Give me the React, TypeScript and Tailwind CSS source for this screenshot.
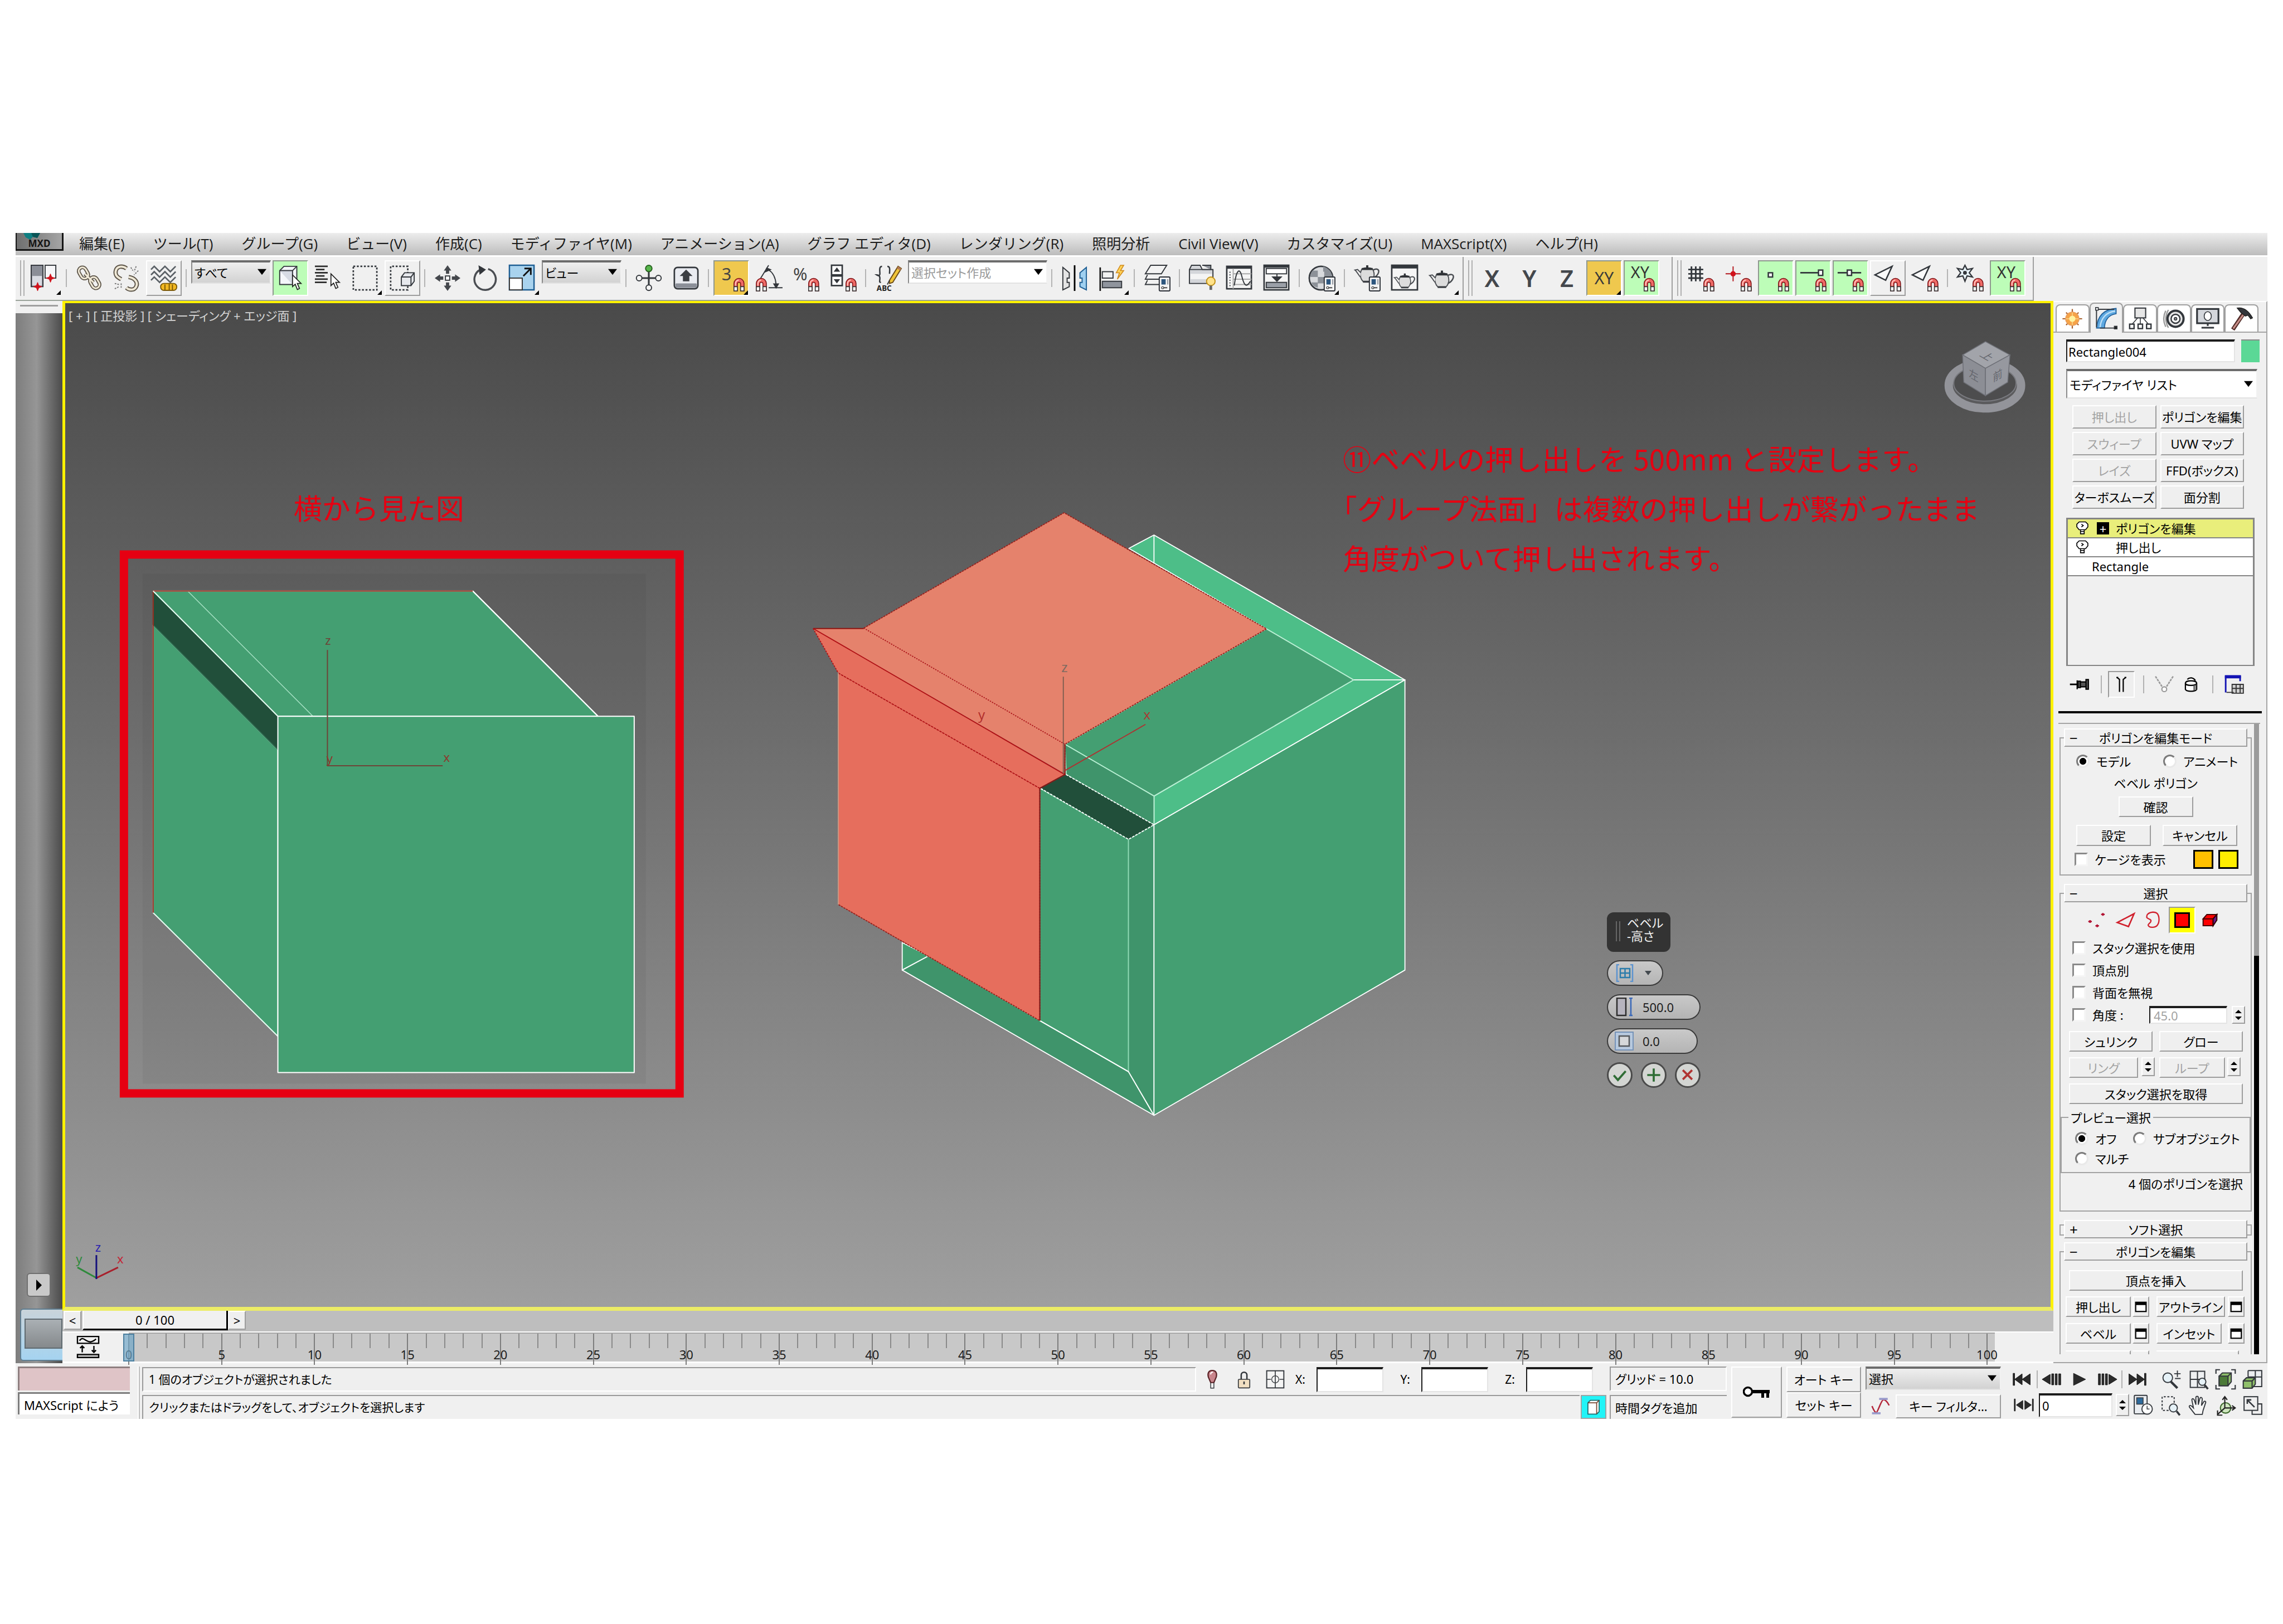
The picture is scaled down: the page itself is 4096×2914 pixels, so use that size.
import React from "react";

const UI = "font-['Noto_Sans','Noto_Sans_CJK_JP',sans-serif] [font-feature-settings:'palt']";
const RAISED = "border-2 border-t-white border-l-white border-r-[#9d9d9d] border-b-[#9d9d9d] bg-[#efefef]";
const SUNKEN = "border-2 border-t-[#9a9a9a] border-l-[#9a9a9a] border-r-white border-b-white bg-[#efefef]";
const FIELD = "border-t-4 border-l-2 border-t-[#1c1c1c] border-l-[#1c1c1c] border-r-2 border-b-2 border-r-[#e4e4e4] border-b-[#e4e4e4] bg-white";

/* ---------- icon helpers ---------- */

function Icon({ children, className = "size-12" }: { children: React.ReactNode; className?: string }) {
  return (
    <svg viewBox="-0.5 -0.5 25 25" className={`overflow-visible ${className}`} fill="none" stroke="#33373c" strokeWidth="1" aria-hidden="true">
      {children}
    </svg>
  );
}

function Magnet({ x = 14, y = 12 }: { x?: number; y?: number }) {
  return (
    <g transform={`translate(${x} ${y})`}>
      <path d="M.5 12V5a4.7 4.7 0 0 1 9.4 0v7H6.7V5.4a1.5 1.5 0 0 0-3 0V12z" fill="#ee6a66" stroke="#7d1216" strokeWidth=".8" />
      <path d="M2 7V5a3.2 3.2 0 0 1 3-3.2" stroke="#ffc9c4" strokeWidth="1" />
      <path d="M.5 8h3.2v4H.5zM6.7 8h3.2v4H6.7z" fill="#fff" stroke="#333" strokeWidth=".8" />
    </g>
  );
}

function Star({ x, y }: { x: number; y: number }) {
  return <path d={`M${x} ${y - 4}l1.1 2.9 2.9 1.1-2.9 1.1-1.1 2.9-1.1-2.9-2.9-1.1 2.9-1.1z`} fill="#d0121b" stroke="#d0121b" strokeWidth=".5" />;
}

function Dialog({ x = 14, y = 11 }: { x?: number; y?: number }) {
  return (
    <g transform={`translate(${x} ${y})`}>
      <rect x="0" y="0" width="10" height="13" rx="1" fill="#f4f4f4" stroke="#2b2f36" />
      <rect x="2" y="2" width="4" height="5" fill="#2d567e" stroke="none" />
      <path d="M8 2v5" stroke="#8a8f98" />
      <path d="M2.5 10h5" stroke="#444" />
      <circle cx="3.2" cy="10" r="1" fill="#fff" stroke="#444" strokeWidth=".7" />
    </g>
  );
}

function Teapot({ x = 0, y = 0, s = 1 }: { x?: number; y?: number; s?: number }) {
  return (
    <g transform={`translate(${x} ${y}) scale(${s})`}>
      <path d="M7 5.5c3-1.6 7-1.6 10 0 2.5 4.5 1.5 9-1 11.5H8C5.5 14.5 4.5 10 7 5.5z" fill="#dcdcdc" stroke="#4a4d52" />
      <path d="M5.6 13C3 10 2.5 8 .5 6.5L3 6l3 3" fill="#eee" stroke="#4a4d52" />
      <path d="M17.5 6.5c3.5-2 6-.5 5 2.5-.8 2.2-2.5 4-5 5" stroke="#4a4d52" strokeWidth="1.3" />
      <path d="M7 5.5h10M12 2v2.5" stroke="#2f3236" strokeWidth="2" />
      <path d="M8 17.5h8" stroke="#3a3d42" strokeWidth="1.5" />
    </g>
  );
}

function Cursor({ x, y }: { x: number; y: number }) {
  return <path d={`M${x} ${y}v11l2.5-2.3 2 5 2-1-2-4.7h3.5z`} fill="#fff" stroke="#222" strokeWidth=".9" />;
}

type ToolState = "flat" | "raised" | "green" | "orange";

const toolState: Record<ToolState, string> = {
  flat: "border-transparent",
  raised: "border-t-white border-l-white border-r-[#9d9d9d] border-b-[#9d9d9d]",
  green: "bg-[#bdfdb8] border-t-[#8f988f] border-l-[#8f988f] border-r-white border-b-white",
  orange: "bg-[#efc84e] border-t-[#8f988f] border-l-[#8f988f] border-r-white border-b-white",
};

function Tool({ label, state = "flat", flyout, children }: { label: string; state?: ToolState; flyout?: boolean; children: React.ReactNode }) {
  return (
    <button type="button" aria-label={label} className={`relative flex size-16 shrink-0 items-center justify-center border-2 ${toolState[state]}`}>
      {children}
      {flyout && (
        <svg viewBox="0 0 6 6" className="absolute right-0 bottom-0 size-2" aria-hidden="true">
          <path d="M6 0v6H0z" fill="#000" />
        </svg>
      )}
    </button>
  );
}

function Sep() {
  return <span className="mx-1 h-8 w-[3px] shrink-0 self-center border-l-2 border-[#b4b4b4]" />;
}

function Handle() {
  return <span className="h-16 w-2 shrink-0 border-x-2 border-[#b0b0b0]" />;
}

function Dropdown({ label, options, className, tone = "grey" }: { label: string; options: string[]; className: string; tone?: "grey" | "white" | "muted" }) {
  const tones = {
    grey: "bg-linear-to-b from-[#efefef] to-[#d2d2d2] text-black",
    white: "bg-white text-black",
    muted: "bg-white text-[#9a9a9a]",
  };
  return (
    <div className={`relative shrink-0 ${className}`}>
      <select
        aria-label={label}
        className={`h-full w-full appearance-none rounded-none border-t-4 border-r-2 border-b-2 border-l-2 border-t-[#6c6c6c] border-r-[#f2f2f2] border-b-[#e2e2e2] border-l-[#8a8a8a] pl-1 leading-none outline-none ${tones[tone]}`}
      >
        {options.map((o) => (
          <option key={o}>{o}</option>
        ))}
      </select>
      <svg viewBox="0 0 12 8" className="pointer-events-none absolute top-1/2 right-2 h-3 w-4 -translate-y-1/2" aria-hidden="true">
        <path d="M0 0h12L6 8z" fill="#000" />
      </svg>
    </div>
  );
}

/* ---------- menu ---------- */

const menus = [
  "編集(E)", "ツール(T)", "グループ(G)", "ビュー(V)", "作成(C)", "モディファイヤ(M)", "アニメーション(A)",
  "グラフ エディタ(D)", "レンダリング(R)", "照明分析", "Civil View(V)", "カスタマイズ(U)", "MAXScript(X)", "ヘルプ(H)",
];

function MenuBar() {
  return (
    <header className="flex h-[43px] items-start border-b-3 border-white bg-linear-to-b from-[#ededed] to-[#bcbcbc]">
      <button
        type="button"
        aria-label="アプリケーション メニュー"
        className="relative flex h-8 w-[86px] items-end justify-center overflow-hidden border-r-3 border-b-3 border-l-2 border-[#151515] bg-linear-to-r from-[#6f6f6f] to-[#a5a5a5] text-[17px] leading-5 font-bold text-[#141414]"
      >
        <svg viewBox="0 0 40 12" className="absolute top-0 left-2 h-3 w-10" aria-hidden="true">
          <path d="M4 0h30l-5 9-8-2-5 5-8-4z" fill="#0f7f82" />
          <path d="M18 0h16l-5 9-8-2z" fill="#0a5557" />
        </svg>
        <span>MXD</span>
      </button>
      <nav className="ml-7 flex h-[38px] items-center gap-[51px] text-[26px] leading-none whitespace-nowrap text-[#1c1c1c] font-['Open_Sans','Noto_Sans_CJK_JP',sans-serif] [font-feature-settings:normal]">
        {menus.map((m) => (
          <button type="button" key={m}>{m}</button>
        ))}
      </nav>
    </header>
  );
}

/* ---------- toolbar ---------- */

function ToolGroup({ children, className }: { children: React.ReactNode; className: string }) {
  return (
    <div className={`flex items-start gap-[3px] border-r-2 border-b-2 border-r-[#a0a0a0] border-b-[#9aa39a] pt-1.5 pb-[7px] pl-2 ${className}`}>{children}</div>
  );
}

function Toolbar() {
  return (
    <div className={`flex bg-[#f0f0f0] text-[24px] ${UI}`} role="toolbar" aria-label="メイン ツールバー">
      <ToolGroup className="pr-[5px]">
        <Handle />
        <Tool label="レイアウト" flyout>
          <Icon>
            <rect x="0" y="0" width="11" height="20" fill="#8b8e97" />
            <rect x="1" y="10" width="9" height="9" fill="#d9dbe2" stroke="none" />
            <rect x="13" y="0" width="10" height="12" fill="#f6f6f8" />
            <Star x={6} y={20} />
            <Star x={18} y={12} />
          </Icon>
        </Tool>
        <Sep />
        <Tool label="リンク">
          <Icon>
            <g stroke="#5b5347" strokeWidth="3.4"><rect x="3" y="2" width="7" height="11" rx="3.5" transform="rotate(-30 6 7)" /><rect x="14" y="11" width="7" height="11" rx="3.5" transform="rotate(-30 17 17)" /><path d="M8 8l8 8" /></g>
            <g stroke="#efe8d6" strokeWidth="1.6"><rect x="3" y="2" width="7" height="11" rx="3.5" transform="rotate(-30 6 7)" /><rect x="14" y="11" width="7" height="11" rx="3.5" transform="rotate(-30 17 17)" /><path d="M8 8l8 8" /></g>
          </Icon>
        </Tool>
        <Tool label="リンク解除">
          <Icon>
            <g stroke="#5b5347" strokeWidth="4"><path d="M12 3C8 0 3 1 2 5s1 6 5 8M14 11c6 1 9 5 7 9s-7 3-9 1" /></g>
            <g stroke="#efe8d6" strokeWidth="2"><path d="M12 3C8 0 3 1 2 5s1 6 5 8M14 11c6 1 9 5 7 9s-7 3-9 1" /></g>
            <path d="M16 2l2 3M21 1l-2 5M23 5l-4 4M1 17l4 1M1 22l4-2M7 17v5" stroke="#777" strokeDasharray="1.5 1" />
          </Icon>
        </Tool>
        <Tool label="スペース ワープにバインド" state="raised">
          <Icon>
            <g stroke="#5a6066" strokeWidth="1.4"><path d="M0 4l3-3 5 5 5-5 5 5 5-5M0 9l3-3 5 5 5-5 5 5 5-5M0 14l3-3 5 5 5-5 5 5 5-5" /></g>
            <rect x="9" y="17" width="15" height="6.5" rx="3" fill="#f2b822" stroke="#7d5a06" />
            <path d="M13 18v5M17 17v6M20 18v5" stroke="#7d5a06" />
          </Icon>
        </Tool>
        <Sep />
        <Dropdown label="選択フィルタ" options={["すべて"]} className="h-[42px] w-[143px] text-[22px]" />
        <Tool label="オブジェクトを選択" state="green">
          <Icon>
            <path d="M2 5l4-4h12v13l-3 4H2z" fill="#f4f6fa" />
            <path d="M2 5h12v13M14 5l4-4" fill="#d7dbe4" />
            <Cursor x={14} y={9} />
          </Icon>
        </Tool>
        <Tool label="名前から選択">
          <Icon>
            <path d="M0 1h12M1 4h8M0 7h12M1 10h8M0 13h12M0 16h11" stroke="#2c2c2c" strokeWidth="1.4" />
            <Cursor x={15} y={8} />
          </Icon>
        </Tool>
        <Tool label="矩形選択領域" flyout>
          <Icon><rect x="1" y="1" width="22" height="22" strokeWidth="1.4" strokeDasharray="1.8 1.5" /></Icon>
        </Tool>
        <Tool label="ウィンドウ/交差" state="raised">
          <Icon>
            <path d="M17 8V1H1v22h16v-4" strokeWidth="1.4" strokeDasharray="1.8 1.5" />
            <path d="M11 11l3-4h9v8l-3 4h-9z" fill="#e6e8ec" />
            <path d="M11 11h9v8M20 11l3-4" />
          </Icon>
        </Tool>
        <Sep />
        <Tool label="移動">
          <Icon>
            <g fill="#44474c" stroke="none"><path d="M12 0l3.5 5h-2v3h-3V5h-2zM12 24l-3.5-5h2v-3h3v3h2zM0 12l5-3.5v2h3v3H5v2zM24 12l-5 3.5v-2h-3v-3h3v-2z" /></g>
            <rect x="10" y="10" width="4" height="4" fill="#fff" />
          </Icon>
        </Tool>
        <Tool label="回転">
          <Icon>
            <path d="M15 3.5A10 10 0 1 1 8 4" stroke="#4a4d52" strokeWidth="1.8" />
            <path d="M6 0l7 4-6 5z" fill="#33363b" stroke="none" />
          </Icon>
        </Tool>
        <Tool label="スケール" flyout>
          <Icon>
            <rect x="0" y="0" width="23" height="23" fill="#a9d3ee" stroke="#1f5f94" strokeWidth="1.3" />
            <rect x="0" y="12" width="12" height="11" fill="#fff" stroke="#333" />
            <path d="M13 10l7-7M14 3h6v6" stroke="#111" strokeWidth="1.5" />
          </Icon>
        </Tool>
        <Dropdown label="参照座標系" options={["ビュー"]} className="h-[42px] w-[143px] text-[22px]" />
        <Sep />
        <Tool label="基点中心を使用">
          <Icon>
            <path d="M12 6v13M4 12h16" strokeWidth="1.6" />
            <circle cx="12" cy="3" r="3" fill="#57b64c" stroke="#27611f" />
            <g fill="#f4f4f4"><circle cx="3" cy="12" r="2.6" /><circle cx="21" cy="12" r="2.6" /><circle cx="12" cy="21" r="2.6" /></g>
          </Icon>
        </Tool>
        <Tool label="選択して操作">
          <Icon>
            <rect x="1" y="2" width="22" height="20" rx="3" fill="#e9ebf0" strokeWidth="1.4" />
            <rect x="2" y="17" width="20" height="4" rx="1" fill="#8b8f98" stroke="none" />
            <path d="M12 4l6 6h-3v5H9v-5H6z" fill="#3a3d42" stroke="none" />
          </Icon>
        </Tool>
        <Sep />
        <Tool label="スナップ切り替え" state="orange" flyout>
          <Icon>
            <text x="3" y="14" fontSize="16" fill="#444" stroke="none">3</text>
            <Magnet />
          </Icon>
        </Tool>
        <Tool label="角度スナップ">
          <Icon>
            <path d="M12 0L4 13M11 4c5 2 8 8 8 16M12 21h13" />
            <path d="M8 7l2-5 5 2zM16 17h6l-3 5z" fill="#33363b" stroke="none" />
            <Magnet x={0} />
          </Icon>
        </Tool>
        <Tool label="パーセント スナップ">
          <Icon>
            <text x="0" y="14" fontSize="16" fill="#444" stroke="none">%</text>
            <Magnet />
          </Icon>
        </Tool>
        <Tool label="スピナー スナップ">
          <Icon>
            <rect x="1" y="0" width="10" height="9" fill="#fff" strokeWidth="1.4" /><rect x="1" y="10" width="10" height="9" fill="#fff" strokeWidth="1.4" />
            <path d="M3 6l3-4 3 4zM3 13l3 4 3-4z" fill="#33363b" stroke="none" />
            <Magnet />
          </Icon>
        </Tool>
        <Sep />
        <Tool label="名前付き選択セットを編集">
          <Icon>
            <path d="M6 1C3 1 4 5 4 8S1 9 1 9s3 0 3 3-1 4 1 4M11 1c3 0 2 4 2 7" strokeWidth="1.3" />
            <path d="M13 14l8-13 3 2-8 13-3 1z" fill="#f0c53a" stroke="#6d4c17" />
            <path d="M20 3l3 2 1-2-3-2z" fill="#b37a55" stroke="none" />
            <path d="M13 14l-2 4" />
            <text x="1" y="24" fontSize="7" fontWeight="700" fill="#222" stroke="none">ABC</text>
          </Icon>
        </Tool>
        <Dropdown label="名前付き選択セット" options={["選択セット作成"]} tone="muted" className="h-[42px] w-[250px] text-[22px]" />
        <Sep />
        <Tool label="ミラー">
          <Icon>
            <path d="M1 2l6 5v5H5v4h2v4l-6 3z" fill="#e4e4e4" />
            <path d="M12 0v24" stroke="#000" strokeWidth="1.5" />
            <path d="M23 2l-6 5v5h2v4h-2v4l6 3z" fill="#9fd0f0" stroke="#1f5f94" />
          </Icon>
        </Tool>
        <Tool label="位置合わせ" flyout>
          <Icon>
            <path d="M1 2v22" stroke="#111" strokeWidth="1.4" />
            <rect x="3" y="6" width="10" height="6" fill="#f2f2f2" /><rect x="3" y="15" width="18" height="6" fill="#8f949d" />
            <path d="M20 0l-4 7h3l-2 6 6-8h-3l3-5z" fill="#ffd45a" stroke="#d08a1c" strokeWidth=".8" />
          </Icon>
        </Tool>
        <Sep />
        <Tool label="レイヤ管理">
          <Icon>
            <g fill="#f3f3f3"><path d="M6 0h15l-5 8H1zM3 9l-2 4h14M3 14l-2 4h14" /></g>
            <Dialog />
          </Icon>
        </Tool>
        <Sep />
        <Tool label="リボン">
          <Icon>
            <path d="M0 4l2-4h8l2 4h10v13H0z" fill="#d4d6da" /><path d="M0 4h22M12 0h8v4" fill="#8c9098" />
            <rect x="1" y="8" width="20" height="5" fill="#f4f4f4" stroke="none" />
            <circle cx="20" cy="15" r="4" fill="#ffe28a" stroke="#c39218" /><path d="M20 19v4" stroke="#666" strokeWidth="2.5" />
          </Icon>
        </Tool>
        <Tool label="カーブ エディタ">
          <Icon>
            <rect x="0" y="1" width="23" height="21" fill="#f5f5f5" strokeWidth="1.4" /><path d="M0 2h23" strokeWidth="2.5" />
            <path d="M6 3v19M6 8h17M6 13h17M6 18h17" stroke="#aaa" /><path d="M3 6v14" strokeDasharray="1 1.5" />
            <path d="M7 19C9 4 12 2 14 10s4 12 8 5" />
          </Icon>
        </Tool>
        <Tool label="スケマティック ビュー">
          <Icon>
            <rect x="0" y="0" width="23" height="23" fill="#f5f5f5" strokeWidth="1.4" /><path d="M0 1h23" strokeWidth="2.5" />
            <rect x="2" y="3" width="19" height="5" fill="#fff" /><rect x="2" y="16" width="19" height="5" fill="#9ba0a8" />
            <path d="M12 8v5" /><path d="M8 11h8l-4 4z" fill="#33363b" />
          </Icon>
        </Tool>
        <Sep />
        <Tool label="マテリアル エディタ" flyout>
          <Icon>
            <circle cx="11" cy="12" r="11" fill="#d8dadd" strokeWidth="1.4" />
            <path d="M3 5h5v6H1c0-3 1-4 2-6zM13 1c3 1 6 3 7 5h-7zM8 11h6v6H8zM2 16h6v5c-3-1-5-2-6-5zM14 6h6l2 5h-8z" fill="#8c9198" stroke="none" />
            <Dialog />
          </Icon>
        </Tool>
        <Sep />
        <Tool label="レンダリング設定">
          <Icon><Teapot y={-2} /><Dialog /></Icon>
        </Tool>
        <Tool label="レンダリング フレーム ウィンドウ">
          <Icon>
            <rect x="0" y="0" width="24" height="23" fill="#f5f5f5" strokeWidth="1.4" /><path d="M0 1.5h24" strokeWidth="3" />
            <Teapot x={2} y={6} s={0.85} />
          </Icon>
        </Tool>
        <Tool label="プロダクション レンダリング" flyout>
          <Icon><Teapot y={3} /></Icon>
        </Tool>
      </ToolGroup>
      <ToolGroup className="pr-[22px]">
        <Handle />
        <Tool label="X に拘束"><span className="text-[42px] leading-none font-semibold text-[#44474c]">X</span></Tool>
        <Tool label="Y に拘束"><span className="text-[42px] leading-none font-semibold text-[#44474c]">Y</span></Tool>
        <Tool label="Z に拘束"><span className="text-[42px] leading-none font-semibold text-[#44474c]">Z</span></Tool>
        <Tool label="XY 平面に拘束" state="orange" flyout><span className="text-[30px] leading-none text-[#3a3a3a]">XY</span></Tool>
        <Tool label="XY 軸拘束スナップ" state="green">
          <Icon><text x="2" y="12" fontSize="15" fill="#333" stroke="none">XY</text><Magnet /></Icon>
        </Tool>
      </ToolGroup>
      <ToolGroup className="pr-[13px]">
        <Handle />
        <Tool label="グリッド スナップ"><Icon><path d="M3 1v14M7 1v14M11 1v14M0 4h14M0 8h14M0 12h14" strokeWidth="1.5" /><Magnet /></Icon></Tool>
        <Tool label="基点スナップ"><Icon><path d="M7 1v14M0 8h14" stroke="#b3161c" /><circle cx="7" cy="8" r="2.5" fill="#d0121b" stroke="none" /><Magnet /></Icon></Tool>
        <Tool label="頂点スナップ" state="green"><Icon><rect x="5" y="7" width="4" height="4" fill="#fff" strokeWidth="1.3" /><Magnet /></Icon></Tool>
        <Tool label="端点スナップ" state="green"><Icon><path d="M0 7h17" strokeWidth="1.5" /><rect x="17" y="4.5" width="4" height="5" fill="#fff" strokeWidth="1.3" /><Magnet /></Icon></Tool>
        <Tool label="中点スナップ" state="green"><Icon><path d="M0 7h22" strokeWidth="1.5" /><rect x="9" y="4.5" width="4" height="5" fill="#fff" strokeWidth="1.3" /><Magnet /></Icon></Tool>
        <Tool label="面スナップ" state="raised"><Icon><path d="M16 1L0 9l10 5z" fill="#fafafa" strokeWidth="1.3" /><Magnet /></Icon></Tool>
        <Tool label="面中心スナップ"><Icon><path d="M16 1L0 9l10 5z" fill="#fafafa" strokeWidth="1.3" /><Magnet /></Icon></Tool>
        <Sep />
        <Tool label="フリーズ オブジェクト スナップ"><Icon><path d="M7 0l2 4 5-1-3 4 3 4-5-1-2 5-2-5-5 1 3-4-3-4 5 1z" fill="#e8f4fb" strokeWidth="1.2" /><circle cx="7" cy="7" r="1.3" fill="#33363b" /><Magnet /></Icon></Tool>
        <Tool label="軸拘束スナップ" state="green"><Icon><text x="2" y="12" fontSize="15" fill="#333" stroke="none">XY</text><Magnet /></Icon></Tool>
      </ToolGroup>
    </div>
  );
}

/* ---------- viewport ---------- */

function Scene() {
  return (
    <svg viewBox="117 544 3560 1803" className="absolute inset-0 h-full w-full" aria-hidden="true">
      {/* side view inset */}
      <rect x="253" y="1030" width="904" height="916" fill="#000" opacity=".04" />
      <g strokeWidth="2" strokeLinejoin="round">
        <path d="M272 1061H846L1071 1286H496z" fill="#449f72" stroke="#e8fff4" />
        <path d="M272 1122L496 1346V1861L272 1639z" fill="#449f72" stroke="#e8fff4" />
        <path d="M272 1061L496 1286V1346L272 1122z" fill="#214f3a" stroke="#2c6b4e" />
        <path d="M334 1061L559 1286" stroke="#a9e3c6" strokeWidth="1.5" />
        <path d="M846 1061L1071 1286" stroke="#fff" />
        <path d="M496 1286H1136V1926H496z" fill="#449f72" stroke="#fff" />
        <path d="M272 1639V1061H846" fill="none" stroke="#9c2a1e" />
        <path d="M272 1061L496 1286" stroke="#e8fff4" />
        <path d="M585 1167V1375H792" fill="none" stroke="#6d4437" />
      </g>
      <g fontSize="22" fill="#6d4437" textAnchor="middle">
        <text x="586" y="1158">z</text>
        <text x="799" y="1368" fill="#8c3a2e">x</text>
        <text x="589" y="1370" fill="#8c3a2e">y</text>
      </g>
      <rect x="219.5" y="995.5" width="998" height="968" fill="none" stroke="#e60012" strokeWidth="15" />

      {/* isometric view */}
      <g transform="translate(1432 895) scale(.727)" strokeWidth="2.5" strokeLinejoin="round">
        <path d="M815 123L877 90L1497 448H1370z" fill="#4dbe88" stroke="#fff" />
        <path d="M877 90V160" stroke="#fff" />
        <path d="M1497 448L877 806V735L1370 448z" fill="#4dbe88" stroke="#fff" />
        <path d="M1155 322L1370 448L877 735L657 607z" fill="#449f72" stroke="#b8efd3" />
        <path d="M657 607L877 735V806L660 682z" fill="#3f946b" stroke="#b8efd3" />
        <path d="M255 1097V1165L320 1130z" fill="#449f72" stroke="#fff" />
        <path d="M255 1165L877 1524L814 1416L320 1130z" fill="#3f946b" stroke="#fff" />
        <path d="M595 716L814 842V1416L595 1290z" fill="#449f72" stroke="#8fd9b4" />
        <path d="M814 842L877 806V1524L814 1416z" fill="#3f946b" stroke="#8fd9b4" />
        <path d="M597 716L660 682L877 806L814 842z" fill="#214f3a" stroke="none" />
        <path d="M660 682L877 806L814 842L597 716" fill="none" stroke="#fff" strokeDasharray="6 3" />
        <path d="M877 806L1497 448V1165L877 1524z" fill="#449f72" stroke="#fff" />
        <path d="M595 1290L814 1416L877 1524" fill="none" stroke="#fff" />
        <path d="M655 35L1155 322L657 607L160 320z" fill="#e5826c" stroke="none" />
        <path d="M35 321L160 320L657 607V680z" fill="#e5826c" stroke="none" />
        <path d="M35 321L97 431L595 716L657 682z" fill="#e66e5d" stroke="none" />
        <path d="M97 431V1003L595 1290V716z" fill="#e66e5d" stroke="none" />
        <g fill="none" stroke="#b01015">
          <path d="M160 320L655 35L1155 322L657 607V682L595 716V1290L97 1003" stroke="#98201c" strokeDasharray="5 2" />
          <path d="M657 607V682L595 716V1290" stroke="#7a1c1a" strokeWidth="3" />
          <path d="M35 321H160" stroke="#8c1512" strokeWidth="3" />
          <path d="M35 321L97 431" strokeDasharray="4 3" />
          <path d="M160 320L657 607" strokeDasharray="3 3" />
          <path d="M35 321L657 682" />
          <path d="M97 431L595 716" strokeDasharray="6 2" />
          <path d="M97 431V1003" stroke="#c99a86" />
        </g>
        <path d="M653 440V680" stroke="#7a5d4f" />
        <path d="M657 672L856 558" stroke="#b03030" />
      </g>
      <g fontSize="24" textAnchor="middle">
        <text x="1909" y="1207" fill="#7d6a60">z</text>
        <text x="2057" y="1292" fill="#a83a34">x</text>
        <text x="1760" y="1292" fill="#b3302c">y</text>
      </g>

      {/* view cube */}
      <ellipse cx="3562" cy="692" rx="65" ry="41" fill="#5a5a5c" stroke="#93949a" strokeWidth="15" />
      <ellipse cx="3562" cy="688" rx="56" ry="32" fill="#4d4d4e" stroke="#7a7b80" strokeWidth="2" />
      <g stroke="#6e7077" strokeWidth="1.5">
        <path d="M3563 613L3607 637L3563 661L3522 637z" fill="#a2a4aa" />
        <path d="M3522 637L3563 661V710L3524 686z" fill="#8c8e95" />
        <path d="M3607 637L3563 661V710L3603 686z" fill="#96989f" />
      </g>
      <g fontSize="20" fill="#65676e" textAnchor="middle">
        <text transform="matrix(.86 .5 -.86 .5 3560 643)">上</text>
        <text transform="matrix(.86 .5 0 1 3542 681)">左</text>
        <text transform="matrix(.86 -.5 0 1 3585 681)">前</text>
      </g>

      {/* world axis tripod */}
      <g fill="none" strokeWidth="3">
        <path d="M170 2295L136 2276" stroke="#2f8a3c" />
        <path d="M170 2295L209 2276" stroke="#a8202c" />
        <path d="M170 2297V2254" stroke="#14107c" />
      </g>
      <g fontSize="22" textAnchor="middle">
        <text x="139" y="2269" fill="#2f8a3c">y</text>
        <text x="213" y="2269" fill="#c32636">x</text>
        <text x="173" y="2248" fill="#2a1fb0">z</text>
      </g>
    </svg>
  );
}

const PILL = "flex h-[46px] items-center rounded-full border-2 border-[#3a3a3a] bg-linear-to-b from-[#c9c9c9] to-[#b4b4b4]";

function Caddy() {
  return (
    <div className="absolute top-[60.7%] left-[77.65%] flex flex-col items-start gap-[15px] text-[22px] leading-none text-[#1d1d1d]">
      <div className="flex h-[71px] w-[114px] items-start rounded-xl bg-[#333] pt-1.5 pl-4 text-[#f2f2f2]">
        <span className="mt-2.5 mr-3 h-9 w-2 border-x-2 border-[#666]" />
        <span className="text-[22px] leading-6">ベベル<br />-高さ</span>
      </div>
      <button type="button" aria-label="ベベル タイプ" className={`${PILL} w-[101px] gap-5 pl-3.5`}>
        <svg viewBox="0 0 32 32" className="size-8" fill="none" stroke="#2b7cab" strokeWidth="2.5" aria-hidden="true">
          <path d="M6 1H2v30h4M26 1h4v30h-4" stroke="#5c93cf" />
          <path d="M8 8h17v16H8zM16.5 8v16M8 16h17" />
        </svg>
        <svg viewBox="0 0 12 8" className="h-2 w-3" aria-hidden="true"><path d="M0 0h12L6 8z" fill="#444a50" /></svg>
      </button>
      <label className={`${PILL} w-[168px] pl-3.5`}>
        <svg viewBox="0 0 32 34" className="h-[34px] w-8" fill="none" aria-hidden="true">
          <rect x="2" y="1" width="16" height="31" fill="#b6b4be" stroke="#2c2c2c" strokeWidth="2.5" />
          <path d="M24 1h6M27 1v31M24 32h6" stroke="#3a68b8" strokeWidth="2.5" />
        </svg>
        <input aria-label="高さ" defaultValue="500.0" className="ml-4 w-20 bg-transparent outline-none" />
      </label>
      <label className={`${PILL} w-[163px] pl-3`}>
        <svg viewBox="0 0 34 34" className="size-[34px]" fill="none" aria-hidden="true">
          <rect x="1" y="1" width="32" height="32" fill="#b7c9de" stroke="#7693b8" strokeWidth="2" />
          <rect x="8" y="8" width="18" height="18" fill="#d6d8da" stroke="#55585c" strokeWidth="2.5" />
        </svg>
        <input aria-label="アウトライン" defaultValue="0.0" className="ml-4 w-20 bg-transparent outline-none" />
      </label>
      <div className="flex gap-[15px]">
        {[
          { n: "OK", d: "M10 22l8 9 15-17", c: "#2f6d35" },
          { n: "適用して続行", d: "M21.5 9v25M9 21.5h25", c: "#2f6d35" },
          { n: "キャンセル", d: "M12 12l18 18M30 12L12 30", c: "#b03432" },
        ].map((b) => (
          <button type="button" key={b.n} aria-label={b.n} className="size-[46px] rounded-full border-3 border-[#4a4a4a] bg-[#d3d5d2]">
            <svg viewBox="0 0 43 43" fill="none" stroke={b.c} strokeWidth="4" aria-hidden="true"><path d={b.d} /></svg>
          </button>
        ))}
      </div>
    </div>
  );
}

const NOTE = "absolute text-[51px] leading-[89px] font-normal whitespace-nowrap text-[#e60012] font-['Noto_Sans_CJK_JP',sans-serif] [font-feature-settings:normal]";

function Viewport() {
  return (
    <main className="relative flex-1 border-x-5 border-t-4 border-b-7 border-[#fff200] border-b-[#ecec66] bg-linear-to-b from-[#4a4a4a] to-[#9f9f9f]">
      <Scene />
      <p className="absolute top-2 left-1.5 text-[22px] leading-7 whitespace-nowrap text-[#d4d4d4]">[ + ] [ 正投影 ] [ シェーディング + エッジ面 ]</p>
      <p className={`${NOTE} top-[17.9%] left-[11.5%]`}>横から見た図</p>
      <p className={`${NOTE} top-[13%] left-[64.35%]`}>
        ⑪ベベルの押し出しを 500mm と設定します。
        <br />
        <span className="[font-feature-settings:'halt']">「</span>グループ法面」は複数の押し出しが繋がったまま
        <br />
        角度がついて押し出されます。
      </p>
      <Caddy />
    </main>
  );
}

/* ---------- timeline ---------- */

const frames = Array.from({ length: 100 }, (_, i) => i);

function TrackLabel({ n }: { n: number }) {
  return (
    <>
      <span className="absolute top-0 -left-px h-14 w-0.5 bg-[#7d7d7d]" />
      <span className="absolute top-[25px] left-0 -translate-x-1/2 text-[22px] leading-6 text-[#1c1c1c]">{n}</span>
    </>
  );
}

function Timeline() {
  return (
    <div className="text-[22px] leading-none">
      <div className="flex h-[39px] items-start border-b-2 border-white bg-[#bebebe] pl-0.5">
        <button type="button" aria-label="前のフレーム" className={`h-[34px] w-8 ${RAISED}`}>&lt;</button>
        <button type="button" className="ml-0.5 h-[35px] w-[261px] border-r-3 border-b-3 border-l-2 border-black border-l-white bg-[#f0f0f0]">0 / 100</button>
        <button type="button" aria-label="次のフレーム" className={`h-[34px] w-8 ${RAISED}`}>&gt;</button>
      </div>
      <div className="flex h-[55px] border-b-3 border-white bg-[#f0f0f0]">
        <button type="button" aria-label="ミニ カーブ エディタ" className="flex w-[119px] items-center justify-start pl-[25px]">
          <svg viewBox="0 0 42 42" className="h-10 w-[42px]" fill="none" stroke="#000" strokeWidth="2.5" aria-hidden="true">
            <path d="M1 1h40v13H1zM5 9c5-7 8-3 13 0s10 4 18-3M10 31V19M6 23l4-4 4 4M32 19v12M28 27l4 4 4-4" />
            <path d="M1 35h40v6H1z" fill="#bbb" />
          </svg>
        </button>
        <div className="relative flex flex-1 border-t-2 border-[#a5a5a5] bg-[#c8c8c8]">
          {frames.map((f) => (
            <div key={f} className="relative flex-1">
              {f % 5 === 0 ? <TrackLabel n={f} /> : <span className="absolute top-0 -left-px h-[26px] w-0.5 bg-[#8a8a8a]" />}
            </div>
          ))}
          <span className="absolute top-0 -left-2.5 h-full w-5 border-2 border-[#4c7f9f] bg-[#6fa5c6]/70" />
        </div>
        <div className="relative w-3.5 border-t-2 border-[#a5a5a5] bg-[#c8c8c8]"><TrackLabel n={100} /></div>
        <div className="w-[105px]" />
      </div>
    </div>
  );
}

/* ---------- command panel ---------- */

function PBtn({ children, className = "", disabled }: { children: React.ReactNode; className?: string; disabled?: boolean }) {
  return (
    <button type="button" disabled={disabled} className={`flex items-center justify-center leading-none whitespace-nowrap ${RAISED} ${disabled ? "text-[#a3a3a3]" : "text-black"} ${className}`}>
      {children}
    </button>
  );
}

function Spinner({ className = "h-9 w-6" }: { className?: string }) {
  return (
    <button type="button" aria-label="値を増減" className={`flex shrink-0 items-center justify-center ${RAISED} ${className}`}>
      <svg viewBox="0 0 12 20" className="h-6 w-3" aria-hidden="true"><path d="M0 7l6-6 6 6zM0 13l6 6 6-6z" fill="#000" /></svg>
    </button>
  );
}

function Radio({ name, label, checked, className = "" }: { name: string; label: string; checked?: boolean; className?: string }) {
  return (
    <label className={`flex h-7 items-center whitespace-nowrap ${className}`}>
      <input
        type="radio"
        name={name}
        defaultChecked={checked}
        className="mr-3 size-6 shrink-0 appearance-none rounded-full border-3 border-t-[#7b7b7b] border-r-[#e9e9e9] border-b-[#e9e9e9] border-l-[#7b7b7b] bg-white checked:bg-[radial-gradient(circle,#000_45%,#fff_50%)]"
      />
      {label}
    </label>
  );
}

function Check({ label, className = "" }: { label: string; className?: string }) {
  return (
    <label className={`flex h-7 items-center whitespace-nowrap ${className}`}>
      <input type="checkbox" className="mr-3 size-6 shrink-0 appearance-none border-3 border-t-[#8a8a8a] border-r-[#f5f5f5] border-b-[#f5f5f5] border-l-[#8a8a8a] bg-white" />
      {label}
    </label>
  );
}

function Title({ sign, children }: { sign: string; children: string }) {
  return (
    <button type="button" className={`relative mx-1.5 flex h-[33px] items-center justify-center leading-none ${RAISED}`}>
      <span className="absolute left-2 text-[26px]">{sign}</span>
      {children}
    </button>
  );
}

const FRAME = "flex flex-col border-2 border-[#a3a3a3]";

const tabs = [
  { n: "作成", icon: <><path d="M12 1v22M1 12h22M5 5l14 14M19 5L5 19" stroke="#a8602c" strokeWidth="1.4" /><circle cx="12" cy="12" r="7.5" fill="#f6a347" stroke="#e9a060" /><path d="M12 5v14M5 12h14" stroke="#fbd58a" /><circle cx="12" cy="12" r="3.5" fill="#fff3a0" stroke="none" /></> },
  { n: "修正", icon: <><path d="M1 23C2 10 9 2 23 1v6c-8 1-13 7-13 16z" fill="#5ea8e0" stroke="#1d5c97" /><path d="M5 22C6 12 12 5 22 4" stroke="#bfe0f7" strokeWidth="1.5" /><path d="M1 22V2h20M5 23h17" strokeWidth="1.2" /><rect x="0" y="0" width="3" height="3" fill="#fff" /><rect x="21" y="21" width="3" height="3" fill="#222" /></> },
  { n: "階層", icon: <><rect x="6" y="0" width="12" height="11" fill="#e6e6e6" strokeWidth="1.3" /><path d="M12 11v7M9 11l-6 7M15 11l6 7" /><g fill="#fff" strokeWidth="1.5"><rect x="0" y="18" width="5" height="5" /><rect x="9.5" y="18" width="5" height="5" /><rect x="19" y="18" width="5" height="5" /></g></> },
  { n: "モーション", icon: <><path d="M3 3C0 9 0 15 3 21M6 2C2 9 2 15 6 22" stroke="#999" strokeWidth="1.5" /><circle cx="14" cy="12" r="9" fill="#e6e6e6" strokeWidth="2.5" /><circle cx="14" cy="12" r="5" fill="#fff" strokeWidth="1.5" /><circle cx="14" cy="12" r="1.5" fill="#999" /></> },
  { n: "表示", icon: <><rect x="0" y="1" width="24" height="16" fill="#d4d7dc" strokeWidth="2" /><path d="M12 17v3M5 22h14" strokeWidth="2" /><ellipse cx="12" cy="9" rx="4" ry="5" fill="#fff" /></> },
  { n: "ユーティリティ", icon: <><path d="M2 24L14 6" stroke="#4e2a26" strokeWidth="4.5" /><path d="M2.5 23L14 7" stroke="#c78e88" strokeWidth="2" /><path d="M7 0c6-1 12 2 17 11l-2 1-3-4-3 1-5-4z" fill="#33363b" stroke="#222" /></> },
];

function Bulb() {
  return (
    <svg viewBox="0 0 26 34" className="h-7 w-6" fill="none" stroke="#000" strokeWidth="2" aria-hidden="true">
      <path d="M9 20H6L1 14V8l5-5h14l5 5v6l-5 6h-3M9 20h8v4H9zM9 24h8v5H9z" fill="#fff" />
      <path d="M11 8l4 3-4 3" />
    </svg>
  );
}

function WinIcon() {
  return (
    <svg viewBox="0 0 20 18" className="h-5 w-[22px]" aria-hidden="true">
      <rect x="1.5" y="1.5" width="17" height="15" fill="#fff" stroke="#000" strokeWidth="2" />
      <path d="M1 1h18v5H1z" />
    </svg>
  );
}

function VRule({ className = "" }: { className?: string }) {
  return <span className={`h-8 w-0.5 shrink-0 bg-[#b2b2b2] ${className}`} />;
}

function CommandPanel() {
  return (
    <aside className="flex w-96 shrink-0 flex-col border-t-2 border-r-2 border-b-2 border-t-white border-r-[#a5a5a5] border-b-[#a5a5a5] bg-[#f0f0f0] pb-3.5 text-[22px] leading-none">
      <div className="flex h-[55px] items-end border-b-2 border-[#a5a5a5] pl-1" role="tablist">
        {tabs.map((t, i) => (
          <button
            type="button"
            role="tab"
            key={t.n}
            aria-label={t.n}
            className={`flex flex-1 items-center justify-center rounded-t-lg border-x-2 border-t-2 border-[#a0a0a0] ${i === 1 ? "-mb-0.5 h-[54px] bg-[#f0f0f0]" : "h-[49px] bg-white"}`}
          >
            <Icon className="size-10">{t.icon}</Icon>
          </button>
        ))}
        <span className="w-3.5" />
      </div>
      <div className="mt-3 mr-3 ml-[23px] flex h-[41px] gap-[11px]">
        <input aria-label="オブジェクト名" defaultValue="Rectangle004" className={`min-w-0 flex-1 pl-0.5 outline-none ${FIELD}`} />
        <button type="button" aria-label="オブジェクト カラー" className="w-[33px] border-t-2 border-[#8a8a8a] bg-[#5bd896]" />
      </div>
      <Dropdown label="モディファイヤ リスト" options={["モディファイヤ リスト"]} tone="white" className="mt-3 mr-4 ml-[23px] h-[53px]" />
      <div className="mt-3 mr-10 ml-[34px] grid auto-rows-[42px] grid-cols-2 gap-x-[7px] gap-y-1.5">
        <PBtn disabled>押し出し</PBtn><PBtn>ポリゴンを編集</PBtn>
        <PBtn disabled>スウィープ</PBtn><PBtn>UVW マップ</PBtn>
        <PBtn disabled>レイズ</PBtn><PBtn>FFD(ボックス)</PBtn>
        <PBtn>ターボスムーズ</PBtn><PBtn>面分割</PBtn>
      </div>
      <ul className="mt-4 mr-[21px] ml-[23px] h-[266px] border-3 border-[#858585] border-b-2">
        <li className="flex h-[34px] items-center border-b-2 border-[#858585] bg-[#e9ee7b] pl-3.5">
          <Bulb />
          <span className="mr-3 ml-3.5 flex size-[22px] items-center justify-center bg-black leading-none text-white">+</span>
          ポリゴンを編集
        </li>
        <li className="flex h-[34px] items-center border-b-2 border-[#858585] bg-white pl-3.5"><Bulb /><span className="w-12" />押し出し</li>
        <li className="flex h-[34px] items-center border-b-2 border-[#858585] bg-white pl-[43px]">Rectangle</li>
      </ul>
      <div className="mt-[9px] ml-[27px] flex h-12 items-center">
        <button type="button" aria-label="スタックを固定">
          <Icon className="h-9 w-10"><path d="M0 12h10" stroke="#000" strokeWidth="2" /><path d="M9 7v11M10 8h3v8h-3zM13 9h7v6h-7zM20 6h3v12h-3z" fill="#555" stroke="#000" strokeWidth="1.5" /></Icon>
        </button>
        <VRule className="mr-[11px] ml-[18px]" />
        <button type="button" aria-label="最終結果を表示" className={`flex size-12 items-center justify-center ${SUNKEN}`}>
          <Icon className="h-8 w-7"><path d="M5 1l4 3v20M19 1l-4 3v20M4 1h3M20 1h-3" stroke="#000" strokeWidth="2" /></Icon>
        </button>
        <VRule className="mr-[18px] ml-[15px]" />
        <button type="button" aria-label="固有にする"><Icon className="size-9"><path d="M1 2l9 14M23 2l-9 14" stroke="#999" strokeWidth="1.8" strokeDasharray="3 1" /><circle cx="12" cy="18" r="3" fill="#fff" stroke="#999" strokeWidth="1.5" /></Icon></button>
        <button type="button" aria-label="モディファイヤを除去" className="ml-4"><Icon className="size-7"><path d="M3 10v10c2 4 16 4 18 0V10M3 10c0-5 18-5 18 0s-18 5-18 0zM6 4c4-4 10-3 13 2" fill="#fff" stroke="#000" strokeWidth="2" /><path d="M17 13v9M20 12v9" stroke="#444" strokeWidth="2" /></Icon></button>
        <VRule className="mr-5 ml-6" />
        <button type="button" aria-label="モディファイヤ セットを設定">
          <Icon className="size-9"><path d="M1 22V2h18v6" stroke="#1414b4" strokeWidth="2" /><path d="M0 2.5h20" stroke="#1414b4" strokeWidth="4" /><path d="M2 22h9M9 12h14v11H9zM9 17h14M14 12v11M19 12v11" fill="#d0d0d0" stroke="#333" strokeWidth="1.3" /></Icon>
        </button>
      </div>
      <div className="mt-6 mr-2 ml-[9px] h-1 bg-black" />
      <div className="mt-[17px] mr-[11px] ml-[9px] h-0.5 bg-[#a5a5a5]" />
      <div className="mr-[13px] ml-[11px] flex flex-1 gap-1">
        <div className="flex flex-1 flex-col">
          <section className={`mt-6 pb-2.5 ${FRAME}`}>
            <div className="-mt-[18px] flex flex-col"><Title sign="−">ポリゴンを編集モード</Title></div>
            <div className="mt-3 flex pl-7">
              <Radio name="mode" label="モデル" checked className="w-[156px]" />
              <Radio name="mode" label="アニメート" />
            </div>
            <p className="mt-[11px] h-7 text-center leading-7">ベベル ポリゴン</p>
            <PBtn className="mt-2.5 h-[37px] w-[134px] self-center">確認</PBtn>
            <div className="mt-3.5 mr-6 ml-7 flex justify-between">
              <PBtn className="h-[38px] w-[134px]">設定</PBtn>
              <PBtn className="h-[38px] w-[134px]">キャンセル</PBtn>
            </div>
            <div className="mt-[7px] mr-[22px] ml-[25px] flex h-[34px] items-center">
              <Check label="ケージを表示" />
              <button type="button" aria-label="ケージ カラー" className="ml-auto h-[34px] w-9 border-3 border-black bg-[#ffc000]" />
              <button type="button" aria-label="選択ケージ カラー" className="ml-[9px] h-[34px] w-9 border-3 border-black bg-[#ffee00]" />
            </div>
          </section>

          <section className={`mt-[31px] pb-[34px] ${FRAME}`}>
            <div className="-mt-[18px] flex flex-col"><Title sign="−">選択</Title></div>
            <div className="mt-2 ml-10 flex h-12 items-center">
              <button type="button" aria-label="頂点" className="flex w-[50px] justify-center"><Icon className="size-8"><path d="M0 14h5M2.5 12v4M10 20h5M12.5 18v4M18 4h5M20.5 2v4" stroke="#b01030" strokeWidth="2" /></Icon></button>
              <button type="button" aria-label="エッジ" className="flex w-[52px] justify-center"><Icon className="size-9"><path d="M2 15L23 4 16 20z" stroke="#d0202c" strokeWidth="1.8" /></Icon></button>
              <button type="button" aria-label="縁取り" className="flex w-[48px] justify-center"><Icon className="size-8"><path d="M4 4C8 0 15 0 18 3c3 4 3 12 0 16-3 4-12 4-13 0 0-2 4-3 4-6s-5-2-6-5c0-2 0-3 1-4z" stroke="#d0202c" strokeWidth="1.8" /></Icon></button>
              <button type="button" aria-label="ポリゴン" className="ml-1 flex h-12 w-12 items-center justify-center border-2 border-t-[#9a9a9a] border-l-[#9a9a9a] border-r-white border-b-white bg-[#ffff00]"><span className="h-7 w-7 border-3 border-black bg-[#f00]" /></button>
              <button type="button" aria-label="要素" className="flex w-[52px] justify-center"><Icon className="h-7 w-8"><path d="M1 10l6-7h16l-6 7zM1 10h16v11H1z" fill="#f00" stroke="#400" strokeWidth="1.8" /><path d="M17 10l6-7v9l-6 9z" fill="#6b1a8a" stroke="#300" strokeWidth="1.8" /></Icon></button>
            </div>
            <div className="mt-3 ml-[21px] flex flex-col gap-3">
              <Check label="スタック選択を使用" />
              <Check label="頂点別" />
              <Check label="背面を無視" />
              <div className="flex h-7 items-center">
                <Check label="角度 :" className="w-[138px]" />
                <input aria-label="角度" defaultValue="45.0" disabled className={`h-8 w-[140px] pl-1.5 leading-none text-[#a3a3a3] ${FIELD}`} />
                <Spinner className="ml-2 h-8 w-6" />
              </div>
            </div>
            <div className="mt-[15px] ml-[15px] flex w-[312px] justify-between"><PBtn className="h-[37px] w-[150px]">シュリンク</PBtn><PBtn className="h-[37px] w-[150px]">グロー</PBtn></div>
            <div className="mt-2.5 ml-[15px] flex w-[312px] items-start">
              <PBtn disabled className="h-[37px] w-[124px]">リング</PBtn><Spinner className="ml-1.5 h-[34px] w-6" />
              <PBtn disabled className="ml-2 h-[37px] w-[118px]">ループ</PBtn><Spinner className="ml-1 h-[34px] w-6" />
            </div>
            <PBtn className="mt-2.5 ml-[15px] h-[37px] w-[312px]">スタック選択を取得</PBtn>
            <fieldset className="mt-2.5 border-2 border-[#a3a3a3] pb-2.5 pl-6">
              <legend className="-ml-3 h-7 px-1 leading-7">プレビュー選択</legend>
              <div className="mt-2.5 flex">
                <Radio name="preview" label="オフ" checked className="w-[104px]" />
                <Radio name="preview" label="サブオブジェクト" />
              </div>
              <Radio name="preview" label="マルチ" className="mt-2" />
            </fieldset>
            <p className="mt-[5px] mr-[14px] h-7 text-right leading-7">4 個のポリゴンを選択</p>
          </section>

          <div className="relative mt-[15px] flex flex-col px-0.5">
            <span className="absolute inset-x-0 top-2 h-5 border-2 border-[#a3a3a3]" />
            <Title sign="+">ソフト選択</Title>
          </div>
          <section className={`mt-[23px] border-b-0 ${FRAME}`}>
            <div className="-mt-[18px] flex flex-col"><Title sign="−">ポリゴンを編集</Title></div>
            <PBtn className="mt-[17px] ml-[15px] h-[37px] w-[312px]">頂点を挿入</PBtn>
            <div className="mt-2.5 ml-[9px] flex"><PBtn className="h-[37px] w-[117px]">押し出し</PBtn><PBtn className="ml-[3px] h-[37px] w-[30px]"><WinIcon /></PBtn><PBtn className="ml-[13px] h-[37px] w-[123px]">アウトライン</PBtn><PBtn className="ml-[5px] h-[37px] w-[30px]"><WinIcon /></PBtn></div>
            <div className="mt-[11px] ml-[9px] flex"><PBtn className="h-[37px] w-[117px]">ベベル</PBtn><PBtn className="ml-[3px] h-[37px] w-[30px]"><WinIcon /></PBtn><PBtn className="ml-[13px] h-[37px] w-[117px]">インセット</PBtn><PBtn className="ml-[11px] h-[37px] w-[30px]"><WinIcon /></PBtn></div>
            <div className="mt-3 ml-[9px] flex h-[7px] gap-[3px] overflow-hidden">
              <span className="w-[117px] border-t-2 border-r-2 border-t-white border-r-[#9d9d9d]" /><span className="w-[30px] border-t-2 border-r-2 border-t-white border-r-[#9d9d9d]" /><span className="ml-2.5 w-[148px] border-t-2 border-r-2 border-t-white border-r-[#9d9d9d]" />
            </div>
          </section>
        </div>
        <div className="flex w-[9px] flex-col bg-black" role="presentation">
          <span className="h-[416px] bg-[#9b9b9b]" />
        </div>
      </div>
    </aside>
  );
}

/* ---------- left strip ---------- */

function LeftStrip() {
  return (
    <div className="flex w-21 shrink-0 flex-col bg-linear-to-r from-[#7d7d7d] via-[#969696] via-45% to-[#4b4b4b]">
      <div className="h-[22px] bg-[#f0f0f0] px-2 pt-[7px]"><div className="h-[3px] bg-[#a0a0a0]" /></div>
      <div className="flex-1" />
      <button type="button" aria-label="展開" className="ml-5 flex h-[43px] w-[43px] items-center justify-center rounded-md border-2 border-[#6f6f6f] bg-[#c9c9c9]">
        <svg viewBox="0 0 10 20" className="h-5 w-2.5" aria-hidden="true"><path d="M0 0l10 10L0 20z" /></svg>
      </button>
      <div className="mt-[21px] mb-1 ml-2 flex h-[94px] flex-col rounded-l-md border-2 border-r-0 border-[#5f7e92] bg-linear-to-b from-[#c9d4da] to-[#a5d3f0] pt-4 pb-5 pl-1.5">
        <span className="flex-1 border-2 border-[#5f6a70] bg-linear-to-b from-[#aab0b4] to-[#85898c]" />
      </div>
    </div>
  );
}

/* ---------- status bar ---------- */

function Coord({ axis }: { axis: string }) {
  return (
    <label className="flex items-center">
      <span className="w-[52px] pr-5 text-right">{axis}:</span>
      <input className={`h-[45px] w-[120px] outline-none ${FIELD}`} />
    </label>
  );
}

function SBtn({ label, className = "w-12", children }: { label: string; className?: string; children: React.ReactNode }) {
  return <button type="button" aria-label={label} className={`flex h-[46px] shrink-0 items-center justify-center ${className}`}>{children}</button>;
}

function Play({ d }: { d: string }) {
  return <svg viewBox="0 0 40 28" className="h-7 w-9" fill="#2b2b2b" stroke="#111" strokeWidth="1" aria-hidden="true"><path d={d} /></svg>;
}

function StatusBar() {
  return (
    <footer className="flex bg-[#f0f0f0] pt-1.5 text-[22px] leading-none whitespace-nowrap">
      <div className="flex w-[221px] shrink-0 flex-col gap-[3px] border-r-2 border-white pr-3.5 pl-1">
        <input aria-label="MAXScript マクロ レコーダ" className="h-[43px] w-full border-t-3 border-l-3 border-[#8f7f80] bg-[#dfc4c7] outline-none" />
        <input aria-label="MAXScript リスナー" defaultValue="MAXScript によう" className="h-10 w-full border-t-3 border-l-3 border-[#7d7d7d] bg-white pl-2 outline-none" />
      </div>
      <div className="flex flex-1 flex-col justify-between border-l-2 border-[#bdbdbd] pl-1 text-[21px]">
        <div className="flex items-center">
          <p className={`flex h-[44px] flex-1 items-center pl-2.5 ${SUNKEN}`}>1 個のオブジェクトが選択されました</p>
          <SBtn label="選択を分離" className="w-[58px]"><Icon className="size-9"><path d="M12 1c5 0 6 4 5 8l-3 7h-4L7 9c-1-4 0-8 5-8z" fill="#c9858c" stroke="#5a2226" strokeWidth="1.5" /><path d="M10 6c0-2 1-3 3-3" stroke="#fff" strokeWidth="1.5" /><path d="M10 16v7h4v-7" /></Icon></SBtn>
          <SBtn label="選択ロック" className="w-[56px]"><Icon className="size-8"><path d="M8 12V6a4 4 0 0 1 8 0v6" strokeWidth="2" /><rect x="4" y="12" width="16" height="12" rx="1" fill="#f1dfc2" strokeWidth="1.3" /><path d="M12 15v4" strokeWidth="2" /></Icon></SBtn>
          <SBtn label="絶対モード変換" className="w-[56px]"><Icon className="size-8"><rect x="0" y="0" width="24" height="24" fill="#f4f4f4" strokeWidth="1.5" /><circle cx="12" cy="12" r="5" /><path d="M12 0v24M0 12h6M18 12h6" strokeWidth="1.3" /></Icon></SBtn>
          <div className="-ml-1.5 flex gap-4">
            <Coord axis="X" /><Coord axis="Y" /><Coord axis="Z" />
          </div>
          <span className="w-[30px]" />
        </div>
        <div className="flex items-end">
          <p className="flex h-[43px] flex-1 items-center border-t-2 border-l-2 border-[#9a9a9a] pl-2.5">クリックまたはドラッグをして、オブジェクトを選択します</p>
          <button type="button" aria-label="適応劣化" className="mr-1.5 ml-0.5 flex h-[43px] w-[46px] items-center justify-center border-2 border-[#9aa5a5] bg-[#21f4f7]"><Icon className="size-7"><path d="M3 5l4-4h14v18l-4 4H3z" fill="#fff" stroke="#1c6d70" strokeWidth="1.6" /><path d="M3 5h14v18M17 5l4-4" stroke="#7a4630" strokeWidth="1.6" /></Icon></button>
        </div>
      </div>
      <div className="flex w-[210px] shrink-0 flex-col justify-between text-[22px]">
        <p className={`flex h-[44px] items-center pl-2 ${SUNKEN}`}>グリッド = 10.0</p>
        <button type="button" className="flex h-[43px] items-center border-t-2 border-l-2 border-[#9a9a9a] pl-2">時間タグを追加</button>
      </div>
      <PBtn className="ml-2 h-[92px] w-[91px] shrink-0">
        <svg viewBox="0 0 50 26" className="h-[26px] w-[50px]" aria-label="キーを設定"><circle cx="9" cy="12" r="7.5" fill="#fff" stroke="#000" strokeWidth="3.5" /><path d="M17 9h31v6h-1v8h-5v-8h-4v8h-5v-8H17z" /></svg>
      </PBtn>
      <div className="ml-2 flex w-[134px] shrink-0 flex-col">
        <PBtn className="h-[46px]">オート キー</PBtn>
        <PBtn className="h-[46px]">セット キー</PBtn>
      </div>
      <div className="ml-2 flex w-[243px] shrink-0 flex-col">
        <Dropdown label="キー モード" options={["選択"]} className="mb-1.5 h-[42px] w-full" />
        <div className="flex items-center">
          <SBtn label="新規キーの既定値" className="h-[43px] w-[54px]"><Icon className="h-9 w-8"><path d="M0 12c2 5 4 9 6 9S13 3 16 3s6 4 8 8" stroke="#b3263a" strokeWidth="2" /><path d="M0 22h12M10 2h12" stroke="#9a9ccc" strokeWidth="3" /></Icon></SBtn>
          <PBtn className="h-[43px] flex-1">キー フィルタ...</PBtn>
        </div>
      </div>
      <div className="ml-3.5 flex w-[266px] shrink-0 flex-col">
        <div className="flex items-center justify-between pr-3">
          <SBtn label="先頭へ"><Play d="M2 2h3v24H2zM5 14L20 3v22zM20 14L36 3v22z" /></SBtn>
          <VRule />
          <SBtn label="前のフレーム"><Play d="M1 14L17 4v20zM20 3h4v22h-4zM27 3h4v22h-4zM34 3h4v22h-4z" /></SBtn>
          <SBtn label="再生"><Play d="M8 2l24 12L8 26z" /></SBtn>
          <SBtn label="次のフレーム"><Play d="M39 14L23 4v20zM2 3h4v22H2zM9 3h4v22H9zM16 3h4v22h-4z" /></SBtn>
          <VRule />
          <SBtn label="最後へ"><Play d="M35 2h3v24h-3zM35 14L20 3v22zM20 14L4 3v22z" /></SBtn>
        </div>
        <div className="flex items-center">
          <SBtn label="キー モード切り替え" className="w-[54px]"><Play d="M1 2h2v24H1zM37 2h2v24h-2zM5 14L18 5v18zM35 14L22 5v18z" /></SBtn>
          <input aria-label="現在のフレーム" defaultValue="0" className={`h-[43px] w-[132px] pl-1 outline-none ${FIELD}`} />
          <Spinner className="ml-1.5 h-10 w-6" />
          <SBtn label="時間設定" className="w-[50px]"><Icon className="size-9"><rect x="1" y="0" width="16" height="23" rx="1" fill="#e9ecf0" strokeWidth="1.3" /><rect x="4" y="3" width="8" height="8" fill="#2d6a9c" /><circle cx="17" cy="17" r="6.5" fill="#fff" strokeWidth="1.3" /><path d="M17 13v4h3" /></Icon></SBtn>
        </div>
      </div>
      <div className="mr-0.5 grid shrink-0 grid-cols-4">
        <SBtn label="ズーム" className="w-[49px]"><Icon className="size-9"><circle cx="8" cy="10" r="6" fill="#e6f2f8" strokeWidth="1.3" /><path d="M12 15l8 8" strokeWidth="3" /><path d="M20 1v8M16 5h8M17 11h7" strokeWidth="1.3" /></Icon></SBtn>
        <SBtn label="すべてズーム" className="w-[49px]"><Icon className="size-9"><path d="M2 2h18v20H2zM11 2v20M2 12h18" fill="#eef0f2" strokeWidth="1.4" /><circle cx="17" cy="15" r="4.5" fill="#e6f2f8" strokeWidth="1.3" /><path d="M20 19l4 5" strokeWidth="2.5" /></Icon></SBtn>
        <SBtn label="オブジェクト全体表示" className="w-[49px]"><Icon className="size-9"><path d="M0 5V0h5M19 0h5v5M24 19v5h-5M5 24H0v-5" strokeWidth="1.5" /><path d="M4 8l4-4h11v11l-4 5H4z" fill="#8fbf6a" strokeWidth="1.5" /><path d="M4 8h11v12H4z" fill="#4c7a38" strokeWidth="1.5" /><path d="M15 8l4-4" strokeWidth="1.5" /></Icon></SBtn>
        <SBtn label="すべて全体表示" className="w-[49px]"><Icon className="size-9"><path d="M6 1h17v20H12M6 1v8M15 1v8M6 9h17" fill="#eceef0" strokeWidth="1.4" /><path d="M0 14l4-4h11v8l-4 5H0z" fill="#8fbf6a" strokeWidth="1.5" /><path d="M0 14h11v9M11 14l4-4" strokeWidth="1.5" /></Icon></SBtn>
        <SBtn label="領域ズーム" className="w-[49px]"><Icon className="size-9"><path d="M9 18H1V1h15v8" strokeWidth="1.4" strokeDasharray="2.5 2" /><circle cx="15" cy="15" r="5" fill="#e6f2f8" strokeWidth="1.3" /><path d="M19 19l4 5" strokeWidth="2.5" /></Icon></SBtn>
        <SBtn label="パン" className="w-[49px]"><Icon className="size-9"><path d="M8 23L1 14c-1-2 1-3 3-1l2 2L4 5c0-2 2-2 3 0l2 6V2c0-2 3-2 3 0v9l2-8c1-2 3-1 3 1l-1 8 3-5c1-1 3 0 2 2l-3 9-1 5z" fill="#f6f6f6" strokeWidth="1.3" /></Icon></SBtn>
        <SBtn label="オービット" className="w-[49px]"><Icon className="size-9"><circle cx="12" cy="15" r="6.5" fill="#cfe6bf" stroke="#3f6b2e" strokeWidth="1.5" /><path d="M11 15V2M8 5l3-4 3 4M11 15h12M20 12l4 3-4 3M11 15l-9 8M2 18v6h6" stroke="#222" strokeWidth="1.5" /></Icon></SBtn>
        <SBtn label="ビューポート最大化" className="w-[49px]"><Icon className="size-9"><path d="M18 10h5v13H11v-5" strokeWidth="1.4" /><rect x="1" y="1" width="17" height="17" fill="#f0f0f0" strokeWidth="1.4" /><path d="M14 14L5 5M5 10V5h5" strokeWidth="1.8" /></Icon></SBtn>
      </div>
    </footer>
  );
}

export default function App() {
  return (
    <div className={`min-h-screen bg-white px-7 pt-[418px] text-black ${UI}`}>
      <div className="overflow-hidden">
        <MenuBar />
        <Toolbar />
        <div className="flex">
          <LeftStrip />
          <div className="flex min-w-0 flex-1 flex-col">
            <Viewport />
            <Timeline />
          </div>
          <CommandPanel />
        </div>
        <StatusBar />
      </div>
    </div>
  );
}
